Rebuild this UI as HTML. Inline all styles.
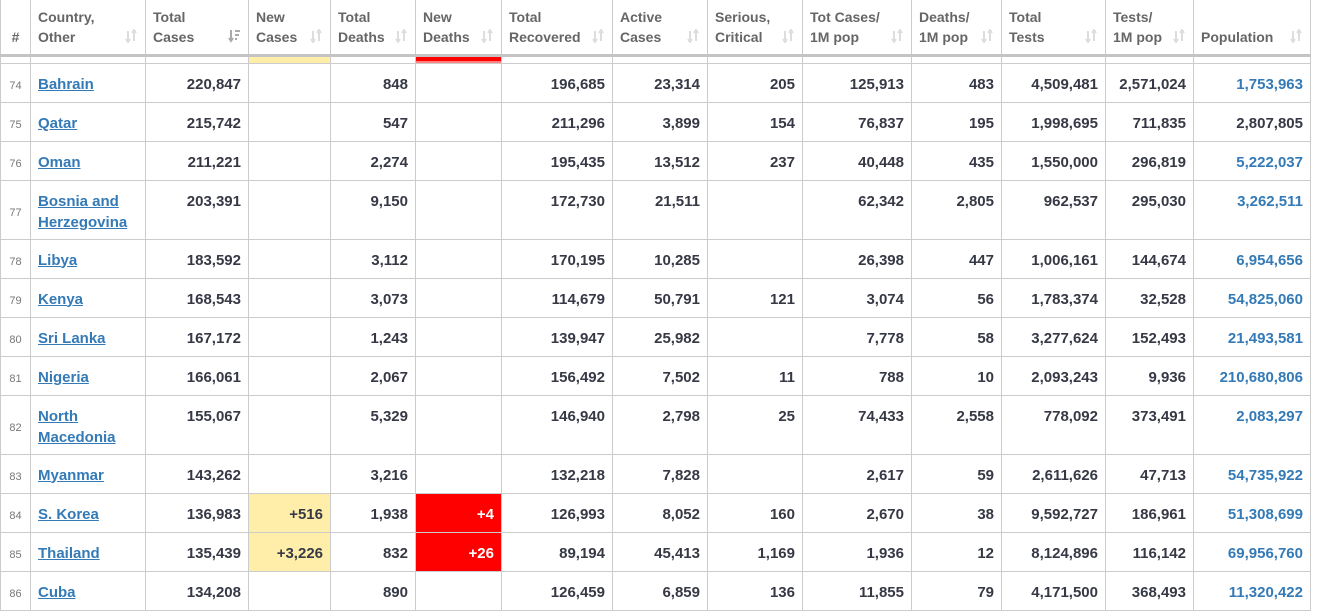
<!DOCTYPE html>
<html><head><meta charset="utf-8"><style>
body{margin:0;background:#fff;font-family:"Liberation Sans",Arial,sans-serif;}
table{position:absolute;left:0;top:0;border-collapse:collapse;table-layout:fixed;width:1310px;}
td,th{border:1px solid #ccc;padding:0 7px 0 7px;box-sizing:border-box;}
th{height:55px;text-align:left;vertical-align:top;font-size:14px;font-weight:bold;color:#666;line-height:20px;padding-top:7px;position:relative;border-top:none;border-bottom:3px solid #c4c4c4;}
th .s{position:absolute;right:8px;top:29px;width:12px;height:14px}
tr.sp td{height:8px;padding:0;border-top:none}
td{font-size:15px;font-weight:bold;color:#363945;text-align:right;vertical-align:top;padding-top:10px;line-height:21px;height:39px}
td.n{font-size:11px;font-weight:normal;color:#777;text-align:center;padding:12px 0 0 0}
td.c{text-align:left;font-size:15px}
a{color:#337ab7;text-decoration:underline}
.b{color:#337ab7}
tr.t td{height:59px}
.y{background:#FFEEAA}
.r{background:#f00;color:#fff}
</style></head><body>
<table>
<colgroup><col style="width:30px"><col style="width:115px"><col style="width:103px"><col style="width:82px"><col style="width:85px"><col style="width:86px"><col style="width:111px"><col style="width:95px"><col style="width:95px"><col style="width:109px"><col style="width:90px"><col style="width:104px"><col style="width:88px"><col style="width:117px"></colgroup>
<tr>
<th style="padding:27px 0 0 0;text-align:center">#</th>
<th>Country,<br>Other<svg class="s" viewBox="0 0 12 14"><path d="M3 2v11M1 10l2 3 2-3M9 12V1M7 4l2-3 2 3" stroke="#ddd" stroke-width="2" fill="none"/></svg></th>
<th>Total<br>Cases<svg class="s" viewBox="0 0 12 14"><path d="M3 1v11M1 9l2 3 2-3M7 2h5M7 6h4M7 10h2" stroke="#aaa" stroke-width="2" fill="none"/></svg></th>
<th>New<br>Cases<svg class="s" viewBox="0 0 12 14"><path d="M3 2v11M1 10l2 3 2-3M9 12V1M7 4l2-3 2 3" stroke="#ddd" stroke-width="2" fill="none"/></svg></th>
<th>Total<br>Deaths<svg class="s" viewBox="0 0 12 14"><path d="M3 2v11M1 10l2 3 2-3M9 12V1M7 4l2-3 2 3" stroke="#ddd" stroke-width="2" fill="none"/></svg></th>
<th>New<br>Deaths<svg class="s" viewBox="0 0 12 14"><path d="M3 2v11M1 10l2 3 2-3M9 12V1M7 4l2-3 2 3" stroke="#ddd" stroke-width="2" fill="none"/></svg></th>
<th>Total<br>Recovered<svg class="s" viewBox="0 0 12 14"><path d="M3 2v11M1 10l2 3 2-3M9 12V1M7 4l2-3 2 3" stroke="#ddd" stroke-width="2" fill="none"/></svg></th>
<th>Active<br>Cases<svg class="s" viewBox="0 0 12 14"><path d="M3 2v11M1 10l2 3 2-3M9 12V1M7 4l2-3 2 3" stroke="#ddd" stroke-width="2" fill="none"/></svg></th>
<th>Serious,<br>Critical<svg class="s" viewBox="0 0 12 14"><path d="M3 2v11M1 10l2 3 2-3M9 12V1M7 4l2-3 2 3" stroke="#ddd" stroke-width="2" fill="none"/></svg></th>
<th>Tot&nbsp;Cases/<br>1M pop<svg class="s" viewBox="0 0 12 14"><path d="M3 2v11M1 10l2 3 2-3M9 12V1M7 4l2-3 2 3" stroke="#ddd" stroke-width="2" fill="none"/></svg></th>
<th>Deaths/<br>1M pop<svg class="s" viewBox="0 0 12 14"><path d="M3 2v11M1 10l2 3 2-3M9 12V1M7 4l2-3 2 3" stroke="#ddd" stroke-width="2" fill="none"/></svg></th>
<th>Total<br>Tests<svg class="s" viewBox="0 0 12 14"><path d="M3 2v11M1 10l2 3 2-3M9 12V1M7 4l2-3 2 3" stroke="#ddd" stroke-width="2" fill="none"/></svg></th>
<th>Tests/<br>1M pop<svg class="s" viewBox="0 0 12 14"><path d="M3 2v11M1 10l2 3 2-3M9 12V1M7 4l2-3 2 3" stroke="#ddd" stroke-width="2" fill="none"/></svg></th>
<th style="padding-top:27px">Population<svg class="s" viewBox="0 0 12 14"><path d="M3 2v11M1 10l2 3 2-3M9 12V1M7 4l2-3 2 3" stroke="#ddd" stroke-width="2" fill="none"/></svg></th>
</tr>
<tr class="sp"><td></td><td></td><td></td><td class="y" style="height:8px"></td><td></td><td style="background:linear-gradient(#f00 0 5px,#fff 5px)"></td><td></td><td></td><td></td><td></td><td></td><td></td><td></td><td></td></tr>
<tr><td class="n">74</td><td class="c"><a>Bahrain</a></td><td>220,847</td><td></td><td>848</td><td></td><td>196,685</td><td>23,314</td><td>205</td><td>125,913</td><td>483</td><td>4,509,481</td><td>2,571,024</td><td class="b">1,753,963</td></tr>
<tr><td class="n">75</td><td class="c"><a>Qatar</a></td><td>215,742</td><td></td><td>547</td><td></td><td>211,296</td><td>3,899</td><td>154</td><td>76,837</td><td>195</td><td>1,998,695</td><td>711,835</td><td>2,807,805</td></tr>
<tr><td class="n">76</td><td class="c"><a>Oman</a></td><td>211,221</td><td></td><td>2,274</td><td></td><td>195,435</td><td>13,512</td><td>237</td><td>40,448</td><td>435</td><td>1,550,000</td><td>296,819</td><td class="b">5,222,037</td></tr>
<tr class="t"><td class="n" style="padding-top:22px">77</td><td class="c"><a>Bosnia and Herzegovina</a></td><td>203,391</td><td></td><td>9,150</td><td></td><td>172,730</td><td>21,511</td><td></td><td>62,342</td><td>2,805</td><td>962,537</td><td>295,030</td><td class="b">3,262,511</td></tr>
<tr><td class="n">78</td><td class="c"><a>Libya</a></td><td>183,592</td><td></td><td>3,112</td><td></td><td>170,195</td><td>10,285</td><td></td><td>26,398</td><td>447</td><td>1,006,161</td><td>144,674</td><td class="b">6,954,656</td></tr>
<tr><td class="n">79</td><td class="c"><a>Kenya</a></td><td>168,543</td><td></td><td>3,073</td><td></td><td>114,679</td><td>50,791</td><td>121</td><td>3,074</td><td>56</td><td>1,783,374</td><td>32,528</td><td class="b">54,825,060</td></tr>
<tr><td class="n">80</td><td class="c"><a>Sri Lanka</a></td><td>167,172</td><td></td><td>1,243</td><td></td><td>139,947</td><td>25,982</td><td></td><td>7,778</td><td>58</td><td>3,277,624</td><td>152,493</td><td class="b">21,493,581</td></tr>
<tr><td class="n">81</td><td class="c"><a>Nigeria</a></td><td>166,061</td><td></td><td>2,067</td><td></td><td>156,492</td><td>7,502</td><td>11</td><td>788</td><td>10</td><td>2,093,243</td><td>9,936</td><td class="b">210,680,806</td></tr>
<tr class="t"><td class="n" style="padding-top:22px">82</td><td class="c"><a>North Macedonia</a></td><td>155,067</td><td></td><td>5,329</td><td></td><td>146,940</td><td>2,798</td><td>25</td><td>74,433</td><td>2,558</td><td>778,092</td><td>373,491</td><td class="b">2,083,297</td></tr>
<tr><td class="n">83</td><td class="c"><a>Myanmar</a></td><td>143,262</td><td></td><td>3,216</td><td></td><td>132,218</td><td>7,828</td><td></td><td>2,617</td><td>59</td><td>2,611,626</td><td>47,713</td><td class="b">54,735,922</td></tr>
<tr><td class="n">84</td><td class="c"><a>S. Korea</a></td><td>136,983</td><td class="y">+516</td><td>1,938</td><td class="r">+4</td><td>126,993</td><td>8,052</td><td>160</td><td>2,670</td><td>38</td><td>9,592,727</td><td>186,961</td><td class="b">51,308,699</td></tr>
<tr><td class="n">85</td><td class="c"><a>Thailand</a></td><td>135,439</td><td class="y">+3,226</td><td>832</td><td class="r">+26</td><td>89,194</td><td>45,413</td><td>1,169</td><td>1,936</td><td>12</td><td>8,124,896</td><td>116,142</td><td class="b">69,956,760</td></tr>
<tr><td class="n">86</td><td class="c"><a>Cuba</a></td><td>134,208</td><td></td><td>890</td><td></td><td>126,459</td><td>6,859</td><td>136</td><td>11,855</td><td>79</td><td>4,171,500</td><td>368,493</td><td class="b">11,320,422</td></tr>
</table>
</body></html>
